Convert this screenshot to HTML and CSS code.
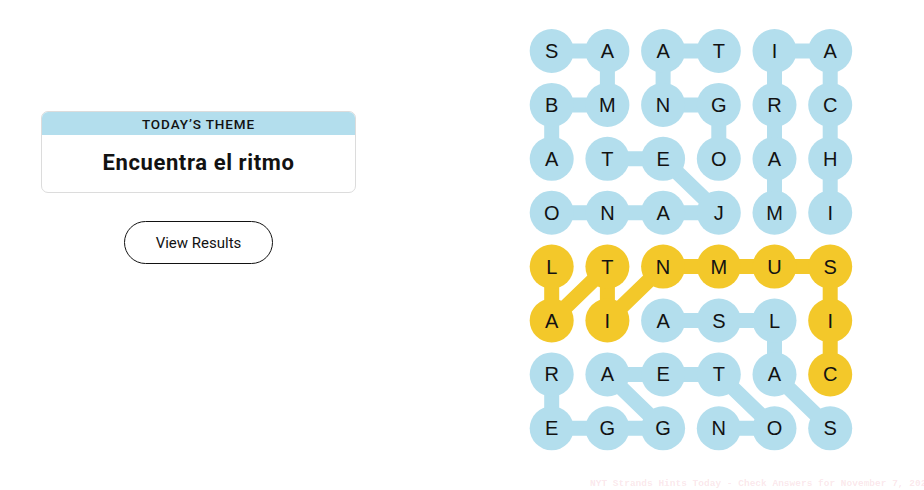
FILE: index.html
```html
<!DOCTYPE html>
<html>
<head>
<meta charset="utf-8">
<link rel="stylesheet" href="styles.css">
</head>
<body>
<div class="page">
  <div class="side">
    <div class="theme">
      <div class="theme-head">TODAY’S THEME</div>
      <div class="theme-body">Encuentra el ritmo</div>
    </div>
    <button class="results">View Results</button>
  </div>
  <svg class="board" width="342" height="432" viewBox="0 0 342 432">
    <g class="lines blue">
      <polyline points="31.7,31 87.4,31 87.4,84.9 31.7,84.9 31.7,138.8"/>
      <polyline points="87.4,138.8 143.1,138.8 198.8,192.7 31.7,192.7"/>
      <polyline points="198.8,31 143.1,31 143.1,84.9 198.8,84.9 198.8,138.8"/>
      <polyline points="254.5,192.7 254.5,31 310.2,31 310.2,192.7"/>
      <polyline points="143.1,300.5 254.5,300.5 254.5,354.4 310.2,408.3"/>
      <polyline points="31.7,354.4 31.7,408.3 143.1,408.3 87.4,354.4 198.8,354.4 254.5,408.3 198.8,408.3"/>
    </g>
    <g class="lines gold">
      <polyline points="31.7,246.6 31.7,300.5 87.4,246.6 87.4,300.5 143.1,246.6 310.2,246.6 310.2,354.4"/>
    </g>
    <g class="dots">
      <circle cx="31.7" cy="31" r="22"/><circle cx="87.4" cy="31" r="22"/><circle cx="143.1" cy="31" r="22"/><circle cx="198.8" cy="31" r="22"/><circle cx="254.5" cy="31" r="22"/><circle cx="310.2" cy="31" r="22"/>
      <circle cx="31.7" cy="84.9" r="22"/><circle cx="87.4" cy="84.9" r="22"/><circle cx="143.1" cy="84.9" r="22"/><circle cx="198.8" cy="84.9" r="22"/><circle cx="254.5" cy="84.9" r="22"/><circle cx="310.2" cy="84.9" r="22"/>
      <circle cx="31.7" cy="138.8" r="22"/><circle cx="87.4" cy="138.8" r="22"/><circle cx="143.1" cy="138.8" r="22"/><circle cx="198.8" cy="138.8" r="22"/><circle cx="254.5" cy="138.8" r="22"/><circle cx="310.2" cy="138.8" r="22"/>
      <circle cx="31.7" cy="192.7" r="22"/><circle cx="87.4" cy="192.7" r="22"/><circle cx="143.1" cy="192.7" r="22"/><circle cx="198.8" cy="192.7" r="22"/><circle cx="254.5" cy="192.7" r="22"/><circle cx="310.2" cy="192.7" r="22"/>
      <circle class="g" cx="31.7" cy="246.6" r="22"/><circle class="g" cx="87.4" cy="246.6" r="22"/><circle class="g" cx="143.1" cy="246.6" r="22"/><circle class="g" cx="198.8" cy="246.6" r="22"/><circle class="g" cx="254.5" cy="246.6" r="22"/><circle class="g" cx="310.2" cy="246.6" r="22"/>
      <circle class="g" cx="31.7" cy="300.5" r="22"/><circle class="g" cx="87.4" cy="300.5" r="22"/><circle cx="143.1" cy="300.5" r="22"/><circle cx="198.8" cy="300.5" r="22"/><circle cx="254.5" cy="300.5" r="22"/><circle class="g" cx="310.2" cy="300.5" r="22"/>
      <circle cx="31.7" cy="354.4" r="22"/><circle cx="87.4" cy="354.4" r="22"/><circle cx="143.1" cy="354.4" r="22"/><circle cx="198.8" cy="354.4" r="22"/><circle cx="254.5" cy="354.4" r="22"/><circle class="g" cx="310.2" cy="354.4" r="22"/>
      <circle cx="31.7" cy="408.3" r="22"/><circle cx="87.4" cy="408.3" r="22"/><circle cx="143.1" cy="408.3" r="22"/><circle cx="198.8" cy="408.3" r="22"/><circle cx="254.5" cy="408.3" r="22"/><circle cx="310.2" cy="408.3" r="22"/>
    </g>
    <g class="letters">
      <text x="31.7" y="38">S</text><text x="87.4" y="38">A</text><text x="143.1" y="38">A</text><text x="198.8" y="38">T</text><text x="254.5" y="38">I</text><text x="310.2" y="38">A</text>
      <text x="31.7" y="91.9">B</text><text x="87.4" y="91.9">M</text><text x="143.1" y="91.9">N</text><text x="198.8" y="91.9">G</text><text x="254.5" y="91.9">R</text><text x="310.2" y="91.9">C</text>
      <text x="31.7" y="145.8">A</text><text x="87.4" y="145.8">T</text><text x="143.1" y="145.8">E</text><text x="198.8" y="145.8">O</text><text x="254.5" y="145.8">A</text><text x="310.2" y="145.8">H</text>
      <text x="31.7" y="199.7">O</text><text x="87.4" y="199.7">N</text><text x="143.1" y="199.7">A</text><text x="198.8" y="199.7">J</text><text x="254.5" y="199.7">M</text><text x="310.2" y="199.7">I</text>
      <text x="31.7" y="253.6">L</text><text x="87.4" y="253.6">T</text><text x="143.1" y="253.6">N</text><text x="198.8" y="253.6">M</text><text x="254.5" y="253.6">U</text><text x="310.2" y="253.6">S</text>
      <text x="31.7" y="307.5">A</text><text x="87.4" y="307.5">I</text><text x="143.1" y="307.5">A</text><text x="198.8" y="307.5">S</text><text x="254.5" y="307.5">L</text><text x="310.2" y="307.5">I</text>
      <text x="31.7" y="361.4">R</text><text x="87.4" y="361.4">A</text><text x="143.1" y="361.4">E</text><text x="198.8" y="361.4">T</text><text x="254.5" y="361.4">A</text><text x="310.2" y="361.4">C</text>
      <text x="31.7" y="415.3">E</text><text x="87.4" y="415.3">G</text><text x="143.1" y="415.3">G</text><text x="198.8" y="415.3">N</text><text x="254.5" y="415.3">O</text><text x="310.2" y="415.3">S</text>
    </g>
  </svg>
</div>
<div class="watermark">NYT Strands Hints Today - Check Answers for November 7, 2025</div>
</body>
</html>
```
FILE: styles.css
```css
html, body {
  margin: 0;
  padding: 0;
  background: #ffffff;
}
body {
  width: 924px;
  height: 490px;
  overflow: hidden;
  position: relative;
  font-family: Roboto, "Liberation Sans", sans-serif;
  color: #121212;
}
.page {
  display: flex;
  align-items: flex-start;
}
.side {
  margin-left: 41px;
  margin-top: 111px;
  width: 315px;
  display: flex;
  flex-direction: column;
  align-items: center;
  gap: 28px;
}
.theme {
  width: 315px;
  box-sizing: border-box;
  border: 1px solid #dcdcdc;
  border-radius: 7px;
  overflow: hidden;
}
.theme-head {
  background: #b3deed;
  height: 23px;
  line-height: 24px;
  text-align: center;
  font-size: 13.5px;
  font-weight: 500;
  letter-spacing: 0.9px;
  color: #121212;
}
.theme-body {
  height: 57px;
  line-height: 55px;
  text-align: center;
  font-size: 22px;
  font-weight: 700;
  letter-spacing: 0.6px;
  color: #121212;
}
.results {
  width: 149px;
  height: 43px;
  box-sizing: border-box;
  border: 1px solid #121212;
  border-radius: 22px;
  background: #ffffff;
  font-family: Roboto, "Liberation Sans", sans-serif;
  font-size: 15px;
  color: #121212;
  padding: 0;
}
.board {
  display: block;
  margin-left: 164px;
  margin-top: 20px;
}
.lines polyline {
  fill: none;
  stroke-width: 15;
  stroke-linejoin: round;
  stroke-linecap: round;
}
.lines.blue polyline { stroke: #b3deed; }
.lines.gold polyline { stroke: #f3c82a; }
.dots circle { fill: #b3deed; }
.dots circle.g { fill: #f3c82a; }
.letters text {
  font-family: "Liberation Sans", Arial, sans-serif;
  font-size: 20px;
  fill: #121212;
  text-anchor: middle;
}
.watermark {
  position: absolute;
  left: 590px;
  top: 478px;
  white-space: nowrap;
  font-family: "Liberation Mono", monospace;
  font-size: 9.5px;
  font-weight: 700;
  color: rgba(230, 120, 140, 0.18);
}
```
